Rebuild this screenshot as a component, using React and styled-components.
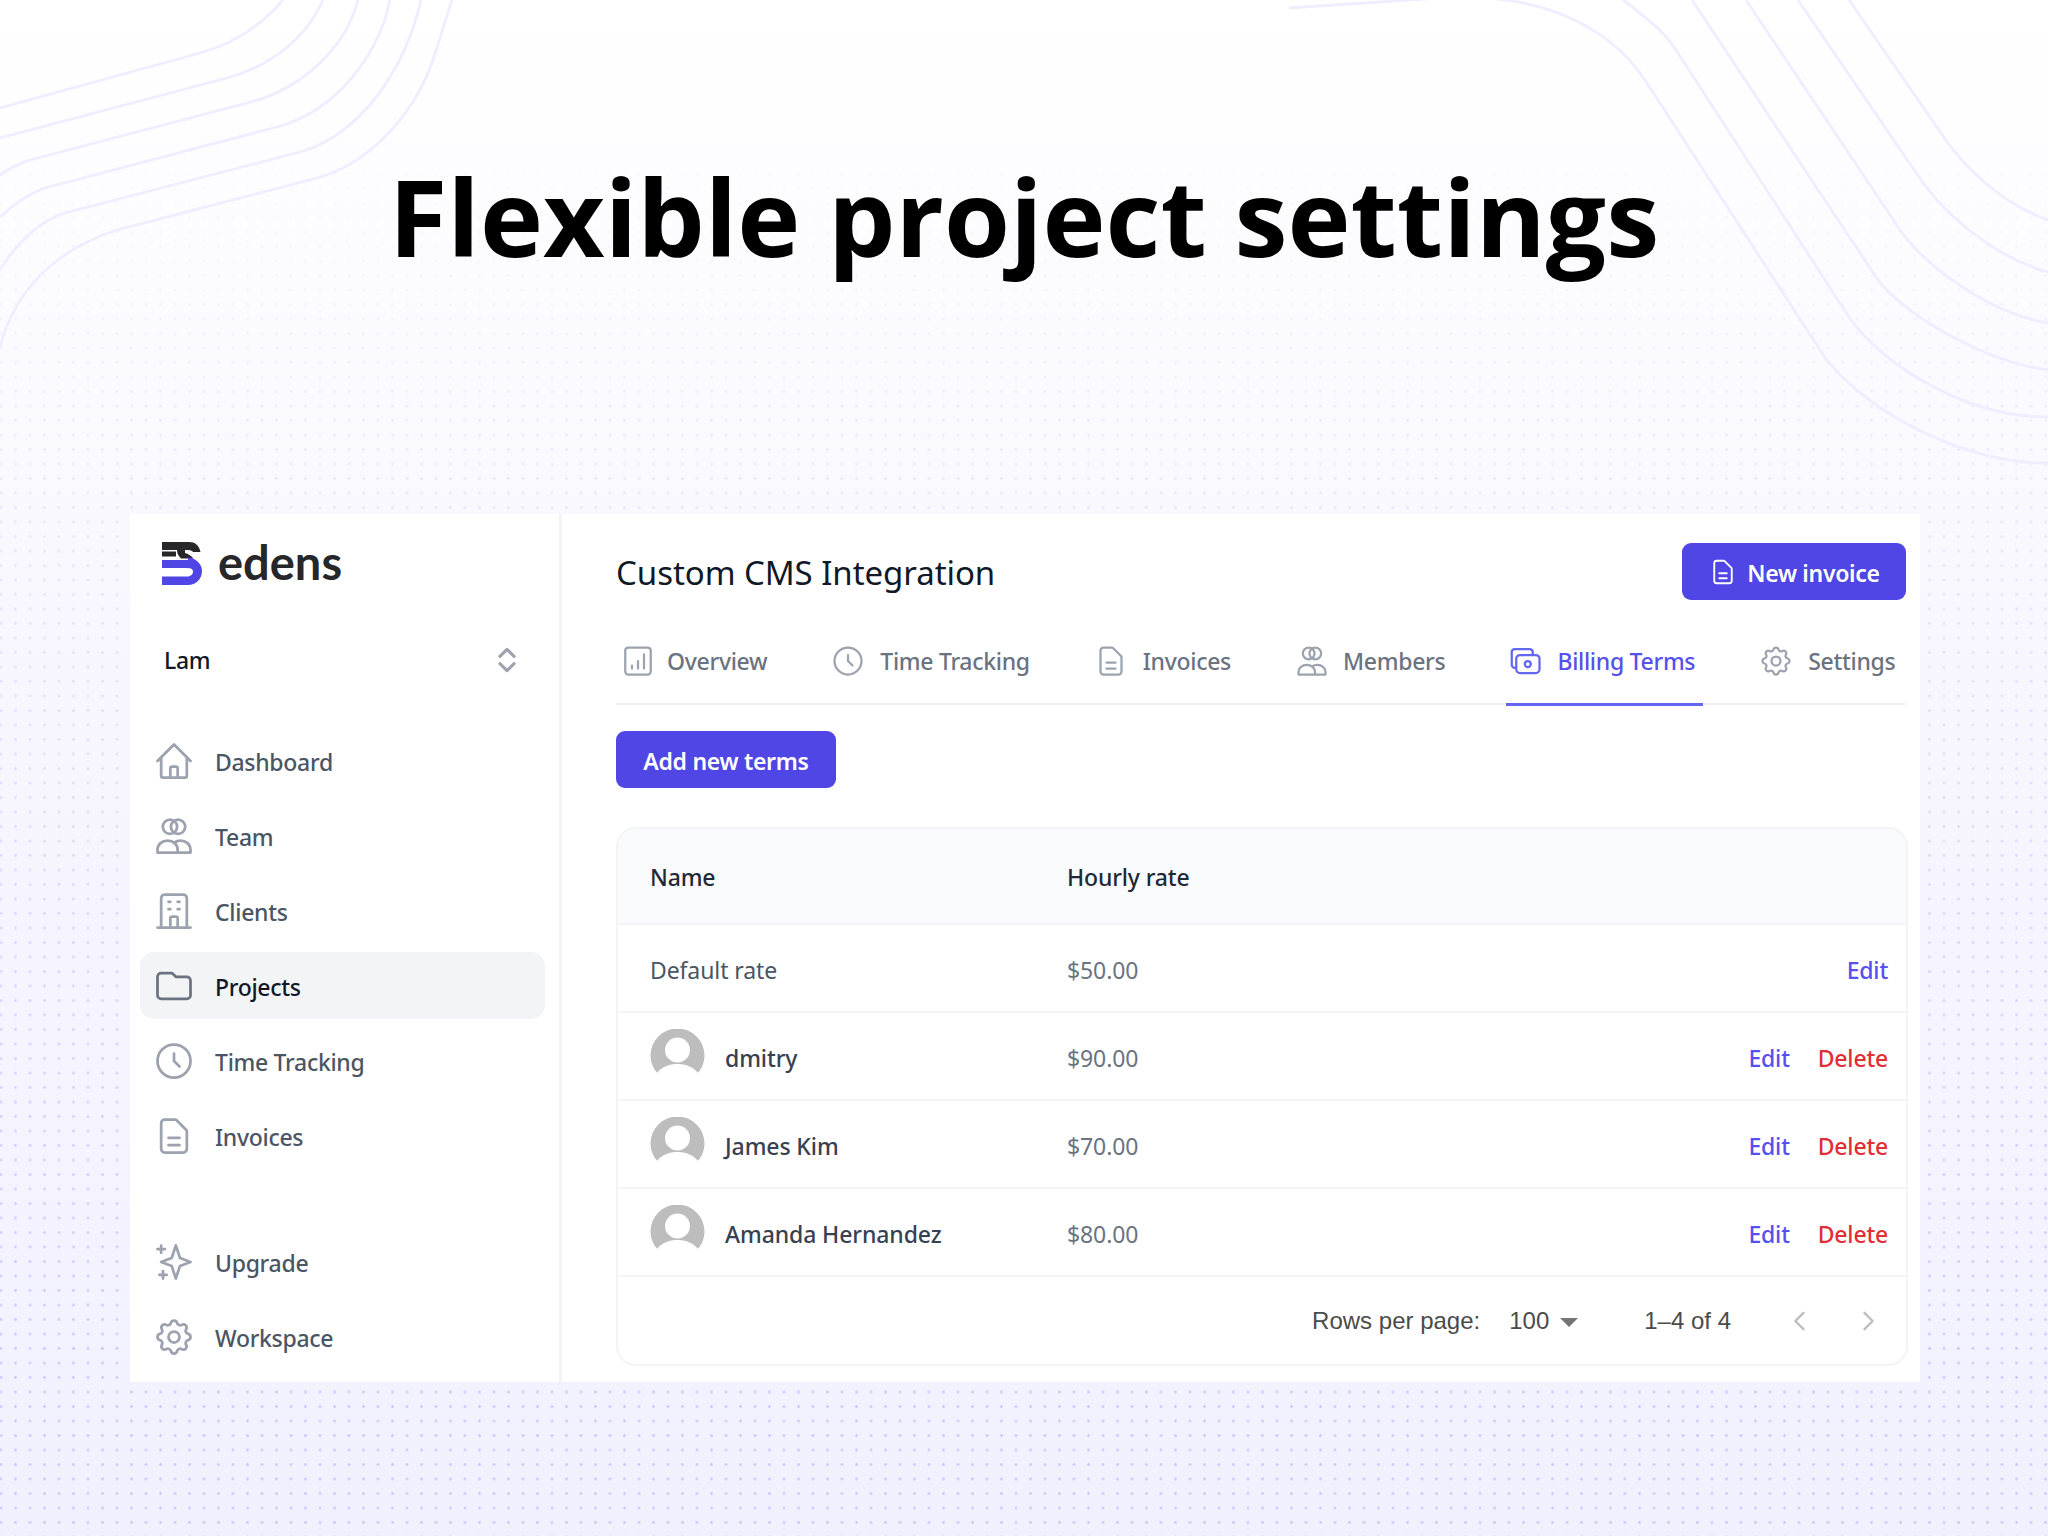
import styled, { createGlobalStyle } from "styled-components";

const GlobalStyle = createGlobalStyle`
  * { box-sizing: border-box; }
  html, body { margin: 0; padding: 0; }
  body { font-family: "Noto Sans", "Open Sans", sans-serif; background: #fff; }
`;

const Page = styled.div`
  position: relative;
  width: 2048px;
  height: 1536px;
  overflow: hidden;
  background: linear-gradient(180deg, #ffffff 0%, #f8f7ff 40%, #f1f0fe 100%);

  &::before {
    content: "";
    position: absolute;
    inset: 0;
    background-image: radial-gradient(circle, #cdc8ff 1px, transparent 1.6px);
    background-size: 14.5px 14.5px;
    background-position: -6.25px -7.25px;
    -webkit-mask-image: linear-gradient(180deg, transparent 8%, rgba(0, 0, 0, 0.35) 30%, #000 90%);
    mask-image: linear-gradient(180deg, transparent 8%, rgba(0, 0, 0, 0.35) 30%, #000 90%);
  }
`;

const Waves = styled.svg`
  position: absolute;
  top: 0;
  left: 0;
  fill: none;
  stroke: #efedff;
  stroke-width: 2.8;
`;

const Content = styled.div`
  position: relative;
  display: flex;
  flex-direction: column;
`;

const Heading = styled.h1`
  margin: 0;
  height: 514px;
  padding-top: 144px;
  text-align: center;
  font-family: "Open Sans", "Noto Sans", sans-serif;
  font-weight: 700;
  font-size: 106.7px;
  line-height: 144px;
  color: #000;
`;

const Card = styled.div`
  display: flex;
  width: 1790px;
  height: 868px;
  margin-left: 130px;
  background: #fff;
`;

const Sidebar = styled.aside`
  display: flex;
  flex-direction: column;
  width: 432px;
  padding: 28px 14px 12px 10px;
  border-right: 3px solid #f3f4f6;
`;

const Logo = styled.div`
  display: flex;
  align-items: center;
  gap: 16px;
  height: 43px;
  margin-left: 22px;
  font-family: "Lato", sans-serif;
  font-weight: 700;
  font-size: 47px;
  color: #27272a;

  svg { flex: none; }
  span { margin-top: -4px; }
`;

const Account = styled.div`
  display: flex;
  align-items: center;
  justify-content: space-between;
  height: 46px;
  margin: 52px 21px 44px 24px;
  font-size: 23px;
  letter-spacing: -0.3px;
  font-weight: 500;
  color: #111827;

  svg { color: #9ca3af; }
`;

const NavGroup = styled.nav`
  display: flex;
  flex-direction: column;
  gap: 8px;
  margin-top: ${(p) => (p.$bottom ? "auto" : "0")};
`;

const NavItem = styled.div`
  display: flex;
  align-items: center;
  gap: 19px;
  height: 67px;
  padding: 0 12px;
  border-radius: 14px;
  font-size: 23px;
  letter-spacing: -0.3px;
  font-weight: 500;
  color: ${(p) => (p.$active ? "#111827" : "#4b5563")};
  background: ${(p) => (p.$active ? "#f3f4f6" : "transparent")};

  svg { color: ${(p) => (p.$active ? "#6b7280" : "#9ca3af")}; }
`;

const NavLabel = styled.span`
  margin-top: 3px;
`;

const Main = styled.main`
  flex: 1;
  min-width: 0;
  padding: 29px 14px 0 54px;
`;

const Header = styled.div`
  display: flex;
  align-items: center;
  justify-content: space-between;
  height: 57px;
`;

const Title = styled.h2`
  margin: 2px 0 0;
  font-size: 33px;
  letter-spacing: -0.06px;
  font-weight: 400;
  color: #111827;
`;

const Button = styled.button`
  display: flex;
  align-items: center;
  justify-content: center;
  gap: 9px;
  width: ${(p) => p.$width};
  height: 57px;
  padding: 2px 0 0;
  border: 0;
  border-radius: 9px;
  background: #4f46e5;
  color: #fff;
  font-family: inherit;
  font-size: 23px;
  letter-spacing: -0.3px;
  font-weight: 600;

  svg { margin-top: -2px; }
`;

const Tabs = styled.div`
  display: flex;
  gap: 53px;
  padding-left: 2px;
  border-bottom: 2px solid #f0f1f3;
`;

const Tab = styled.div`
  display: flex;
  align-items: center;
  gap: ${(p) => p.$gap || 12}px;
  height: 106px;
  margin-bottom: -3px;
  padding: 40px 8px 21px 2px;
  border-bottom: 3px solid ${(p) => (p.$active ? "#6366f1" : "transparent")};
  font-size: 23px;
  letter-spacing: -0.3px;
  font-weight: 500;
  white-space: nowrap;
  color: ${(p) => (p.$active ? "#5850ec" : "#6b7280")};

  svg { color: ${(p) => (p.$active ? "#6366f1" : "#9ca3af")}; }
`;

const AddRow = styled.div`
  margin-top: 26px;
`;

const Table = styled.div`
  display: flex;
  flex-direction: column;
  height: 539px;
  margin: 39px -2px 0 0;
  border: 2px solid #f3f4f6;
  border-radius: 20px;
  overflow: hidden;
`;

const Row = styled.div`
  display: grid;
  grid-template-columns: 417px 1fr auto;
  align-items: center;
  height: ${(p) => (p.$head ? 96 : 88)}px;
  padding: 0 18px 0 32px;
  border-bottom: 2px solid #f3f4f6;
  background: ${(p) => (p.$head ? "#f9fafb" : "#fff")};
`;

const HeadCell = styled.div`
  margin-top: 2px;
  font-size: 23px;
  letter-spacing: -0.15px;
  font-weight: 500;
  color: #1f2937;
`;

const NameCell = styled.div`
  display: flex;
  align-items: center;
  gap: 20px;
  margin-top: ${(p) => (p.$plain ? 3 : 0)}px;
  font-size: 23px;
  letter-spacing: -0.1px;
  font-weight: ${(p) => (p.$plain ? 400 : 500)};
  color: ${(p) => (p.$plain ? "#4b5563" : "#374151")};

  span { margin-top: 4px; }
`;

const RateCell = styled.div`
  margin-top: 3px;
  font-size: 23px;
  letter-spacing: -0.1px;
  color: #6b7280;
`;

const Actions = styled.div`
  display: flex;
  gap: 28px;
  margin-top: 3px;
`;

const ActionLink = styled.a`
  font-size: 23px;
  letter-spacing: -0.2px;
  font-weight: 500;
  color: ${(p) => (p.$danger ? "#e02f36" : "#5850ec")};
`;

const Pager = styled.div`
  flex: 1;
  display: flex;
  align-items: center;
  justify-content: flex-end;
  padding-right: 24px;
  font-family: "Liberation Sans", Arial, sans-serif;
  font-size: 24px;
  color: #4b4b4b;
`;

const PageSize = styled.div`
  display: flex;
  align-items: center;
  gap: 11px;
  margin: 0 66px 0 29px;
`;

const Caret = styled.span`
  width: 0;
  height: 0;
  border-left: 9px solid transparent;
  border-right: 9px solid transparent;
  border-top: 9px solid #757575;
  margin-top: 3px;
`;

const PageNav = styled.div`
  display: flex;
  gap: 40px;
  margin-left: 55px;
  color: #bdbdbd;
`;

const Icon = ({ size = 44, width = 1.5, children }) => (
  <svg width={size} height={size} viewBox="0 0 24 24" fill="none" stroke="currentColor"
    strokeWidth={width} strokeLinecap="round" strokeLinejoin="round" style={{ flex: "none" }}>
    {children}
  </svg>
);

const icons = {
  home: <path d="M3 12l2-2m0 0l7-7 7 7M5 10v10a1 1 0 001 1h3m10-11l2 2m-2-2v10a1 1 0 01-1 1h-3m-6 0a1 1 0 001-1v-4a1 1 0 011-1h2a1 1 0 011 1v4a1 1 0 001 1m-6 0h6" />,
  team: (
    <>
      <circle cx="9.8" cy="7" r="3.9" />
      <circle cx="14.2" cy="7" r="3.9" />
      <path d="M3 21v-1.5C3 16.5 5.5 14.5 8.5 14.5S14 16.5 14 19.5V21M3 21h18v-1.5c0-3-2.5-5-5.5-5-1.2 0-2.3.3-3.2 1" />
    </>
  ),
  building: <path d="M19 21V5a2 2 0 00-2-2H7a2 2 0 00-2 2v16m14 0h2m-2 0h-5m-9 0H3m2 0h5M9 7h1m-1 4h1m4-4h1m-1 4h1m-5 10v-5a1 1 0 011-1h2a1 1 0 011 1v5m-4 0h4" />,
  folder: <path d="M3 7v10a2 2 0 002 2h14a2 2 0 002-2V9a2 2 0 00-2-2h-6l-2-2H5a2 2 0 00-2 2z" />,
  clock: <path d="M12 8v4l3 3m6-3a9 9 0 11-18 0 9 9 0 0118 0z" />,
  doc: <path d="M9 13h6m-6 4h6m2 4H7a2 2 0 01-2-2V5a2 2 0 012-2h5.586a1 1 0 01.707.293l5.414 5.414a1 1 0 01.293.707V19a2 2 0 01-2 2z" />,
  spark: <path d="M5 3v4M3 5h4M6 17v4m-2-2h4m5-16l2.286 6.857L21 12l-5.714 2.143L13 21l-2.286-6.857L5 12l5.714-2.143L13 3z" />,
  cog: (
    <>
      <path d="M10.325 4.317c.426-1.756 2.924-1.756 3.35 0a1.724 1.724 0 002.573 1.066c1.543-.94 3.31.826 2.37 2.37a1.724 1.724 0 001.065 2.572c1.756.426 1.756 2.924 0 3.35a1.724 1.724 0 00-1.066 2.573c.94 1.543-.826 3.31-2.37 2.37a1.724 1.724 0 00-2.572 1.065c-.426 1.756-2.924 1.756-3.35 0a1.724 1.724 0 00-2.573-1.066c-1.543.94-3.31-.826-2.37-2.37a1.724 1.724 0 00-1.065-2.572c-1.756-.426-1.756-2.924 0-3.35a1.724 1.724 0 001.066-2.573c-.94-1.543.826-3.31 2.37-2.37.996.608 2.296.07 2.572-1.065z" />
      <path d="M15 12a3 3 0 11-6 0 3 3 0 016 0z" />
    </>
  ),
  chart: (
    <>
      <rect x="3.5" y="3" width="17" height="18" rx="2" />
      <path d="M8 17v-2M12 17v-5M16 17V7.5" />
    </>
  ),
  money: (
    <>
      <path d="M5 16.5H4.5a2 2 0 01-2-2V6a2 2 0 012-2h10a2 2 0 012 2v2" />
      <rect x="5.5" y="8" width="15.5" height="12" rx="2.5" />
      <circle cx="13.2" cy="14" r="2" />
    </>
  ),
  updown: <path d="M7 9.5l5-5 5 5M7 14.5l5 5 5-5" />,
  left: <path d="M15 5l-7 7 7 7" />,
  right: <path d="M9 5l7 7-7 7" />,
};

const EdensMark = () => (
  <svg width="40" height="43" viewBox="0 0 40 43">
    <path fill="#27272a" d="M0 0H27C33 0 37 3 38.5 10H31C30 8.5 28 8 25 8H0ZM0 9.5H14V14.5H0ZM15 8H23V11C26 12 29 13.5 31.5 16.5H19C16.5 14 15 11.5 15 8Z" />
    <path fill="#4f46e5" d="M0 18H26V15.5C35 16.5 40 22.5 40 29C40 37 34 43 26 43H0V34.5H25C29 34.5 31 32 31 29.5C31 27 29 26 25 26H0Z" />
  </svg>
);

const Avatar = () => (
  <svg width="55" height="55" viewBox="0 0 55 55" style={{ flex: "none" }}>
    <circle cx="27.5" cy="26.5" r="27" fill="#bdbdbd" />
    <circle cx="27.5" cy="21" r="12.5" fill="#fff" />
    <path fill="#fff" d="M5 46C12 37 20 35 27.5 35C35 35 43 37 50 46C44 53 36 56 27.5 56C19 56 11 53 5 46Z" />
  </svg>
);

const wavePaths = [
  "M0 108L200 53C235 43 262 25 283 0",
  "M0 138L227 78C270 66 305 40 323 0",
  "M0 175C10 168 20 163 30 160L247 103C300 90 345 50 358 0",
  "M0 217C15 203 30 193 45 188L277 127C340 110 380 50 390 0",
  "M0 270C15 245 40 220 65 213L300 152C360 135 405 70 421 0",
  "M0 347C15 290 55 250 117 230L317 178C365 165 412 120 433 60L452 0",
  "M1289 8L1440 -2C1530 -8 1605 20 1645 80L1822 353C1852 399 1950 463 2048 463",
  "M1618 -5C1640 15 1660 25 1676 50L1849 317C1877 359 1960 417 2048 417",
  "M1692 0L1876 277C1900 313 1985 362 2048 370",
  "M1746 0L1898 227C1922 263 1985 312 2048 323",
  "M1798 0L1919 177C1943 213 1995 258 2048 272",
  "M1849 0L1941 133C1965 170 2005 205 2048 220",
];

const primaryNav = [
  ["home", "Dashboard"],
  ["team", "Team"],
  ["building", "Clients"],
  ["folder", "Projects", true],
  ["clock", "Time Tracking"],
  ["doc", "Invoices"],
];

const tabs = [
  ["chart", "Overview", 11],
  ["clock", "Time Tracking", 14],
  ["doc", "Invoices", 14],
  ["team", "Members", 13],
  ["money", "Billing Terms", 13, true],
  ["cog", "Settings", 14],
];

const rates = [
  ["dmitry", "$90.00"],
  ["James Kim", "$70.00"],
  ["Amanda Hernandez", "$80.00"],
];

export default function App() {
  return (
    <Page>
      <GlobalStyle />
      <Waves width="2048" height="520" viewBox="0 0 2048 520">
        {wavePaths.map((d) => (
          <path key={d} d={d} />
        ))}
      </Waves>
      <Content>
        <Heading>Flexible project settings</Heading>
        <Card>
          <Sidebar>
            <Logo>
              <EdensMark />
              <span>edens</span>
            </Logo>
            <Account>
              Lam
              <Icon size={34} width={2.2}>{icons.updown}</Icon>
            </Account>
            <NavGroup>
              {primaryNav.map(([icon, label, active]) => (
                <NavItem key={label} $active={active}>
                  <Icon>{icons[icon]}</Icon>
                  <NavLabel>{label}</NavLabel>
                </NavItem>
              ))}
            </NavGroup>
            <NavGroup $bottom>
              <NavItem>
                <Icon>{icons.spark}</Icon>
                <NavLabel>Upgrade</NavLabel>
              </NavItem>
              <NavItem>
                <Icon>{icons.cog}</Icon>
                <NavLabel>Workspace</NavLabel>
              </NavItem>
            </NavGroup>
          </Sidebar>
          <Main>
            <Header>
              <Title>Custom CMS Integration</Title>
              <Button $width="224px">
                <Icon size={30}>{icons.doc}</Icon>
                New invoice
              </Button>
            </Header>
            <Tabs>
              {tabs.map(([icon, label, gap, active]) => (
                <Tab key={label} $gap={gap} $active={active}>
                  <Icon size={36}>{icons[icon]}</Icon>
                  {label}
                </Tab>
              ))}
            </Tabs>
            <AddRow>
              <Button $width="220px">Add new terms</Button>
            </AddRow>
            <Table>
              <Row $head>
                <HeadCell>Name</HeadCell>
                <HeadCell>Hourly rate</HeadCell>
              </Row>
              <Row>
                <NameCell $plain>Default rate</NameCell>
                <RateCell>$50.00</RateCell>
                <Actions>
                  <ActionLink>Edit</ActionLink>
                </Actions>
              </Row>
              {rates.map(([name, rate]) => (
                <Row key={name}>
                  <NameCell>
                    <Avatar />
                    <span>{name}</span>
                  </NameCell>
                  <RateCell>{rate}</RateCell>
                  <Actions>
                    <ActionLink>Edit</ActionLink>
                    <ActionLink $danger>Delete</ActionLink>
                  </Actions>
                </Row>
              ))}
              <Pager>
                Rows per page:
                <PageSize>
                  100
                  <Caret />
                </PageSize>
                1–4 of 4
                <PageNav>
                  <Icon size={28} width={2}>{icons.left}</Icon>
                  <Icon size={28} width={2}>{icons.right}</Icon>
                </PageNav>
              </Pager>
            </Table>
          </Main>
        </Card>
      </Content>
    </Page>
  );
}
